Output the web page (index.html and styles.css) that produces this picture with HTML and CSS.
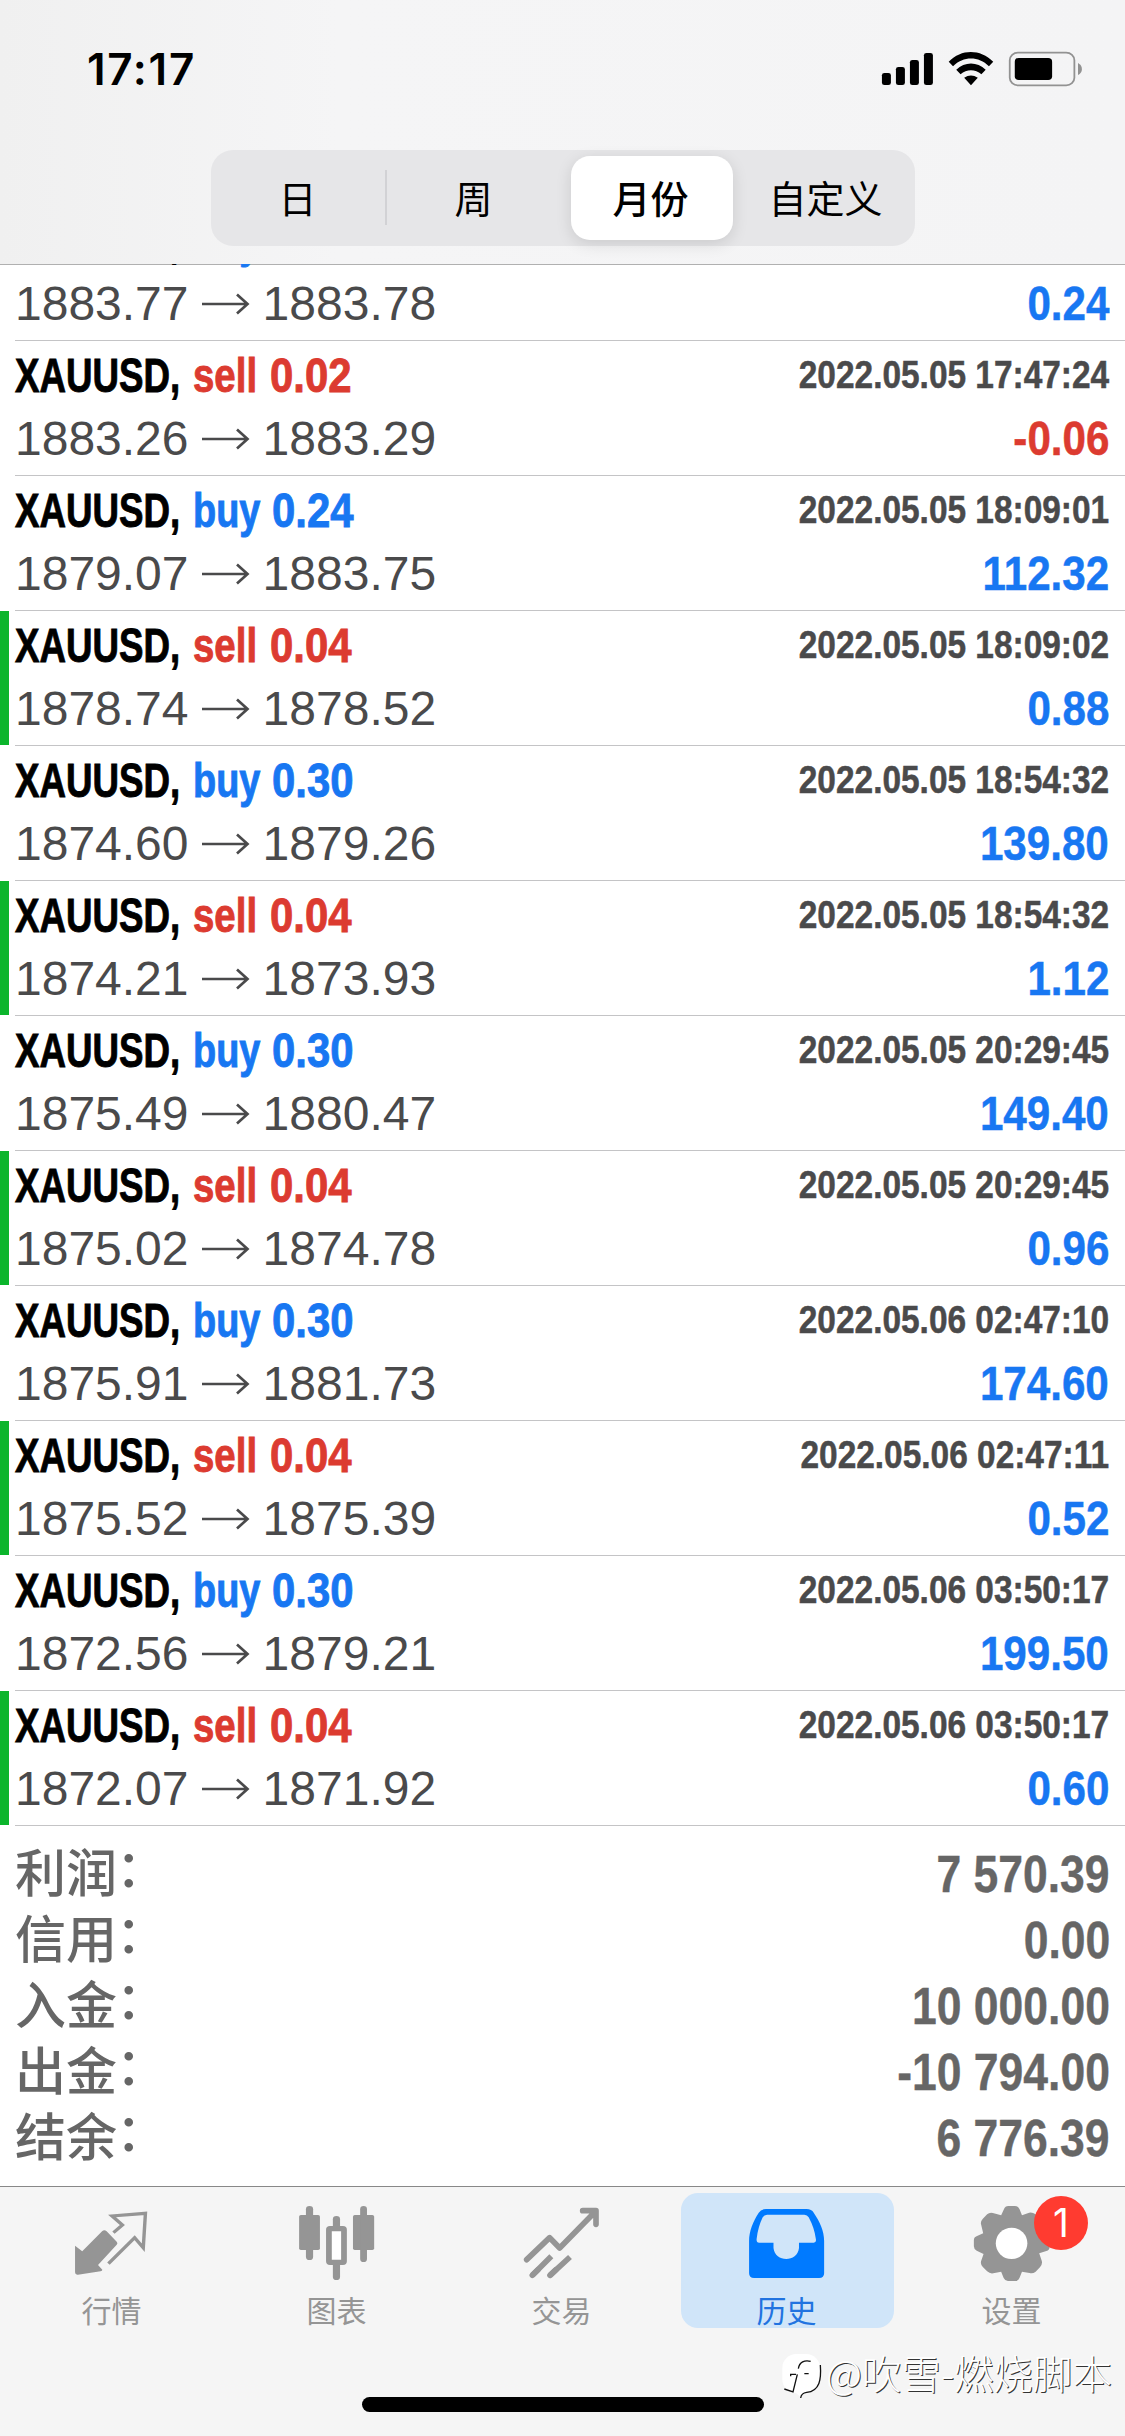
FILE: index.html
```html
<!DOCTYPE html>
<html lang="zh-CN">
<head>
<meta charset="utf-8">
<title>历史</title>
<link rel="stylesheet" href="styles.css">
</head>
<body>
<svg class="defs" width="0" height="0"><symbol id="arrow" viewBox="0 0 48 24"><path d="M0 12H45M35 2.5L45.5 12L35 21.5" fill="none" stroke="currentColor" stroke-width="2.7"/></symbol></svg>
<div class="app">
  <header class="nav">
    <div class="status">
      <span class="clock">17:17</span>
      <svg class="status-icons" viewBox="871.7 135 598.8 150" preserveAspectRatio="none">
        <rect x="891" y="219" width="25" height="36" rx="7"/><rect x="930" y="201" width="25" height="54" rx="7"/><rect x="969" y="180" width="25" height="75" rx="7"/><rect x="1008" y="159" width="25" height="96" rx="7"/>
        <path d="M1077 185C1112 146 1165 146 1201 185L1189 199C1160 168 1118 168 1089 199ZM1098 209C1122 184 1156 184 1180 209L1168 223C1151 207 1127 207 1110 223ZM1120 233Q1139 220 1158 233L1139 256Z"/>
        <rect x="1247" y="158" width="180" height="98" rx="23" fill="none" stroke="#929292" stroke-width="5"/>
        <rect x="1261" y="174" width="104" height="66" rx="11"/><path d="M1437 189Q1448 195 1448 207T1437 225Z" fill="#929292"/>
      </svg>
    </div>
    <div class="segments">
      <div class="segment divided">日</div><div class="segment">周</div><div class="segment selected">月份</div><div class="segment">自定义</div>
    </div>
  </header>
  <main class="list">
    <div class="deal"><div class="line title"><span class="symbol">XAUUSD,</span><span class="kind buy">buy</span><span class="lot buy">0.24</span><time>2022.05.05 17:47:23</time></div><div class="line prices"><span>1883.77</span><svg class="arrow"><use href="#arrow"/></svg><span>1883.78</span><b class="buy">0.24</b></div></div>
    <div class="deal"><div class="line title"><span class="symbol">XAUUSD,</span><span class="kind sell">sell</span><span class="lot sell">0.02</span><time>2022.05.05 17:47:24</time></div><div class="line prices"><span>1883.26</span><svg class="arrow"><use href="#arrow"/></svg><span>1883.29</span><b class="sell">-0.06</b></div></div>
    <div class="deal"><div class="line title"><span class="symbol">XAUUSD,</span><span class="kind buy">buy</span><span class="lot buy">0.24</span><time>2022.05.05 18:09:01</time></div><div class="line prices"><span>1879.07</span><svg class="arrow"><use href="#arrow"/></svg><span>1883.75</span><b class="buy">112.32</b></div></div>
    <div class="deal tp"><div class="line title"><span class="symbol">XAUUSD,</span><span class="kind sell">sell</span><span class="lot sell">0.04</span><time>2022.05.05 18:09:02</time></div><div class="line prices"><span>1878.74</span><svg class="arrow"><use href="#arrow"/></svg><span>1878.52</span><b class="buy">0.88</b></div></div>
    <div class="deal"><div class="line title"><span class="symbol">XAUUSD,</span><span class="kind buy">buy</span><span class="lot buy">0.30</span><time>2022.05.05 18:54:32</time></div><div class="line prices"><span>1874.60</span><svg class="arrow"><use href="#arrow"/></svg><span>1879.26</span><b class="buy">139.80</b></div></div>
    <div class="deal tp"><div class="line title"><span class="symbol">XAUUSD,</span><span class="kind sell">sell</span><span class="lot sell">0.04</span><time>2022.05.05 18:54:32</time></div><div class="line prices"><span>1874.21</span><svg class="arrow"><use href="#arrow"/></svg><span>1873.93</span><b class="buy">1.12</b></div></div>
    <div class="deal"><div class="line title"><span class="symbol">XAUUSD,</span><span class="kind buy">buy</span><span class="lot buy">0.30</span><time>2022.05.05 20:29:45</time></div><div class="line prices"><span>1875.49</span><svg class="arrow"><use href="#arrow"/></svg><span>1880.47</span><b class="buy">149.40</b></div></div>
    <div class="deal tp"><div class="line title"><span class="symbol">XAUUSD,</span><span class="kind sell">sell</span><span class="lot sell">0.04</span><time>2022.05.05 20:29:45</time></div><div class="line prices"><span>1875.02</span><svg class="arrow"><use href="#arrow"/></svg><span>1874.78</span><b class="buy">0.96</b></div></div>
    <div class="deal"><div class="line title"><span class="symbol">XAUUSD,</span><span class="kind buy">buy</span><span class="lot buy">0.30</span><time>2022.05.06 02:47:10</time></div><div class="line prices"><span>1875.91</span><svg class="arrow"><use href="#arrow"/></svg><span>1881.73</span><b class="buy">174.60</b></div></div>
    <div class="deal tp"><div class="line title"><span class="symbol">XAUUSD,</span><span class="kind sell">sell</span><span class="lot sell">0.04</span><time>2022.05.06 02:47:11</time></div><div class="line prices"><span>1875.52</span><svg class="arrow"><use href="#arrow"/></svg><span>1875.39</span><b class="buy">0.52</b></div></div>
    <div class="deal"><div class="line title"><span class="symbol">XAUUSD,</span><span class="kind buy">buy</span><span class="lot buy">0.30</span><time>2022.05.06 03:50:17</time></div><div class="line prices"><span>1872.56</span><svg class="arrow"><use href="#arrow"/></svg><span>1879.21</span><b class="buy">199.50</b></div></div>
    <div class="deal tp"><div class="line title"><span class="symbol">XAUUSD,</span><span class="kind sell">sell</span><span class="lot sell">0.04</span><time>2022.05.06 03:50:17</time></div><div class="line prices"><span>1872.07</span><svg class="arrow"><use href="#arrow"/></svg><span>1871.92</span><b class="buy">0.60</b></div></div>
    <div class="summary">
      <div class="total"><span>利润<i>：</i></span><b>7 570.39</b></div>
      <div class="total"><span>信用<i>：</i></span><b>0.00</b></div>
      <div class="total"><span>入金<i>：</i></span><b>10 000.00</b></div>
      <div class="total"><span>出金<i>：</i></span><b>-10 794.00</b></div>
      <div class="total"><span>结余<i>：</i></span><b>6 776.39</b></div>
    </div>
  </main>
  <footer class="tabbar">
    <div class="tabs">
      <div class="tab"><svg viewBox="0 60 626.6 330" preserveAspectRatio="none"><path d="M209 227L229 244L285 183Q291 178 297 184L325 215Q329 219 325 224L273 285L285 299Q285 303 280 304L217 314Q209 315 209 307Z" fill="#959595"/><path d="M316 188L341 165L312 138L405 130L399 233L375 203L302 281" fill="none" stroke="#959595" stroke-width="9.5"/></svg><span>行情</span></div>
      <div class="tab"><svg viewBox="626.6 60 626.6 330" preserveAspectRatio="none" fill="#959595"><rect x="833" y="135" width="58" height="105" rx="5"/><rect x="852" y="108" width="20" height="162" rx="10"/><rect x="983" y="135" width="59" height="105" rx="5"/><rect x="1003" y="108" width="19" height="168" rx="10"/><rect x="927" y="138" width="20" height="50" rx="10"/><rect x="927" y="270" width="20" height="60" rx="10"/><rect x="916" y="176" width="42" height="101" rx="3" fill="#fff" stroke="#959595" stroke-width="16"/></svg><span>图表</span></div>
      <div class="tab"><svg viewBox="0 0 675 330" fill="none" stroke="#959595" stroke-width="17" stroke-linecap="round" stroke-linejoin="round"><path d="M230 209L299 143L329 174L434 67M398 62H438V103M247 256L264 239M300 256L318 239"/><path d="M247 256L304 199M300 256L360 201" stroke-linecap="butt"/></svg><span>交易</span></div>
      <div class="tab active"><svg viewBox="314.7 60 626.6 330" preserveAspectRatio="none"><path fill="#007aff" fill-rule="evenodd" d="M568 117H681Q695 117 701 128C718 155 730 183 730 212V310Q730 324 716 324H535Q521 324 521 310V212C521 184 532 154 548 128Q554 117 568 117ZM571 134Q563 134 559 142Q546 170 542 207Q541 218 549 218H589V234C593 278 656 278 660 234V218H701Q709 218 707 207Q703 174 687 142Q683 134 675 134Z"/></svg><span>历史</span></div>
      <div class="tab"><svg viewBox="941.3 60 626.6 330" preserveAspectRatio="none"><path fill="#959595" d="M1231 117Q1234 108 1243 108H1261Q1270 108 1274 117L1281 136L1301 128Q1310 126 1319 133L1331 145Q1338 153 1336 163L1329 186L1347 196Q1358 200 1358 211V230Q1358 240 1349 243L1329 250L1336 272Q1339 282 1331 292L1319 305Q1311 312 1302 309L1281 305L1274 324Q1271 333 1262 333H1242Q1234 333 1230 324L1223 305L1201 310Q1192 312 1184 304L1172 291Q1165 283 1167 274L1174 252L1155 242Q1147 238 1147 229V211Q1147 201 1156 198L1173 190L1167 163Q1165 154 1172 146L1184 133Q1191 126 1200 129L1223 136Z"/><ellipse cx="1252" cy="220" rx="44" ry="47" fill="#fff"/></svg><span>设置</span><b class="badge">1</b></div>
    </div>
    <div class="home"></div>
    <div class="watermark"><svg viewBox="36 40 120 138"><rect x="37" y="43" width="113" height="118" rx="42" fill="#fff"/><path d="M76 158H110L92 173Z" fill="#fff"/><path d="M122 65C104 60 88 67 85 87M78 104H62V110M103 102H116M82 104L69 157L43 148M151 76C154 118 150 154 110 158Q94 160 92 175" fill="none" stroke="#111" stroke-width="4"/></svg><span>@吹雪-燃烧脚本</span></div>
  </footer>
</div>
</body>
</html>
```
FILE: styles.css
```css
* { box-sizing: border-box; }
body { margin: 0; background: #fff; }
.defs { position: absolute; }
.app {
  width: 1125px; height: 2436px; display: flex; flex-direction: column; overflow: hidden;
  font-family: "Liberation Sans", "Noto Sans CJK SC", sans-serif;
}
.nav {
  height: 264px; flex: none; display: flex; flex-direction: column; align-items: center;
  background: linear-gradient(90deg, #f0f0f0, #f5f5f6 30%, #f4f4f5);
}
.status { width: 100%; height: 150px; padding: 45px 35px 0 87px; display: flex; justify-content: space-between; align-items: flex-start; }
.clock { font: 600 44px/48px "Inter", sans-serif; letter-spacing: 1.7px; }
.status-icons { width: 215px; height: 50px; }
.segments { width: 704px; height: 96px; border-radius: 22px; background: #e6e6e8; display: flex; }
.segment {
  width: 176px; display: flex; align-items: center; justify-content: center; padding: 0 2px 3px 0;
  font: 400 38px/56px "Noto Sans CJK SC", sans-serif; color: #000;
}
.segment.divided { background: linear-gradient(#d2d2d5, #d2d2d5) 174px 20px / 3px 55px no-repeat; }
.segment.selected { margin: 6px 6px 6px 8px; width: 162px; background: #fff; border-radius: 19px; font-weight: 500; box-shadow: 0 4px 16px rgba(0,0,0,.12); }
.list {
  flex: 1; min-height: 0; overflow: hidden;
  background: linear-gradient(#b0b0b0 0 1px, #fff 1px);
}
.deal {
  height: 135px; padding: 0 16px 0 15px;
  background: linear-gradient(#c4c4c6, #c4c4c6) 15px 134px / 1110px 1px no-repeat;
}
.deal:first-child { margin-top: -58px; }
.deal.tp { border-left: 9px solid; border-image: linear-gradient(#0cb52c 134px, transparent 134px) 0 0 0 9; padding-left: 6px; background-position: 6px 134px; }
.line { display: flex; align-items: baseline; font-size: 48px; line-height: 56px; color: #4a4a4b; white-space: nowrap; }
.title { padding-top: 7px; height: 70px; font-weight: 700; }

/* condensed bold faces: each run is narrowed from its anchored edge */
.symbol, .kind, .lot { flex: none; transform-origin: 0 50%; -webkit-text-stroke: .9px currentColor; }
.symbol { width: 177.5px; color: #000; transform: scaleX(.765); }
.kind { width: 77px; transform: scaleX(.8); }
.kind.buy { width: 79.5px; transform: scaleX(.79); }
.lot { width: 84px; transform: scaleX(.872); }
.title time { margin-left: auto; font-size: 39px; transform: translateY(-4px) scaleX(.857); transform-origin: 100% 50%; -webkit-text-stroke: .5px currentColor; }
.prices b { margin-left: auto; transform: scaleX(.878); transform-origin: 100% 50%; -webkit-text-stroke: .5px currentColor; }
.total b { font-size: 51px; transform: scaleX(.872); transform-origin: 100% 50%; -webkit-text-stroke: .4px currentColor; }

.buy { color: #1877f2; }
.sell { color: #dc3b30; }
.arrow { width: 48px; height: 24px; margin: 0 12.8px 0 13.3px; align-self: center; }
.summary { padding: 11px 15px 0 15px; color: #666; }
.total { height: 66px; display: flex; justify-content: space-between; align-items: baseline; line-height: 66px; white-space: nowrap; }
.total span { font-family: "Noto Sans CJK SC", sans-serif; font-size: 51px; font-weight: 500; }
.total i { font-style: normal; display: inline-block; transform: translate(-1px, -5px); }
.tabbar { position: relative; flex: none; height: 250px; border-top: 1px solid #888; background: #f5f5f5; }
.tabs { display: grid; grid-template-columns: repeat(5, 225px); }
.tab { position: relative; height: 142px; padding-top: 3px; display: flex; flex-direction: column; align-items: center; color: #959595; font: 400 30px/30px "Noto Sans CJK SC", sans-serif; }
.tab svg { width: 225px; height: 110px; flex: none; }
.tab span { margin: -6px 2px 0 0; }
.tab.active { color: #2173e0; background: #d0e5f9; margin: 6px 6px 0; height: 135px; padding-top: 0; border-radius: 17px; }
.tab.active svg { margin-top: -3px; }
.badge { position: absolute; left: 134px; top: 9px; width: 54px; height: 54px; border-radius: 50%; background: #ff3b30; color: #fff; font: 400 39px/54px "Inter", sans-serif; text-align: center; }
.home { width: 402px; height: 15px; border-radius: 8px; background: #000; margin: 68px 0 0 362px; }
.watermark { position: absolute; left: 782px; top: 161px; display: flex; align-items: flex-start; font: 300 39.5px/48px "Noto Sans CJK SC", sans-serif; color: #fff; text-shadow: 1px 1px 0 #333; white-space: nowrap; }
.watermark svg { width: 40px; height: 46px; margin: 5px 4px 0 0; }
```
